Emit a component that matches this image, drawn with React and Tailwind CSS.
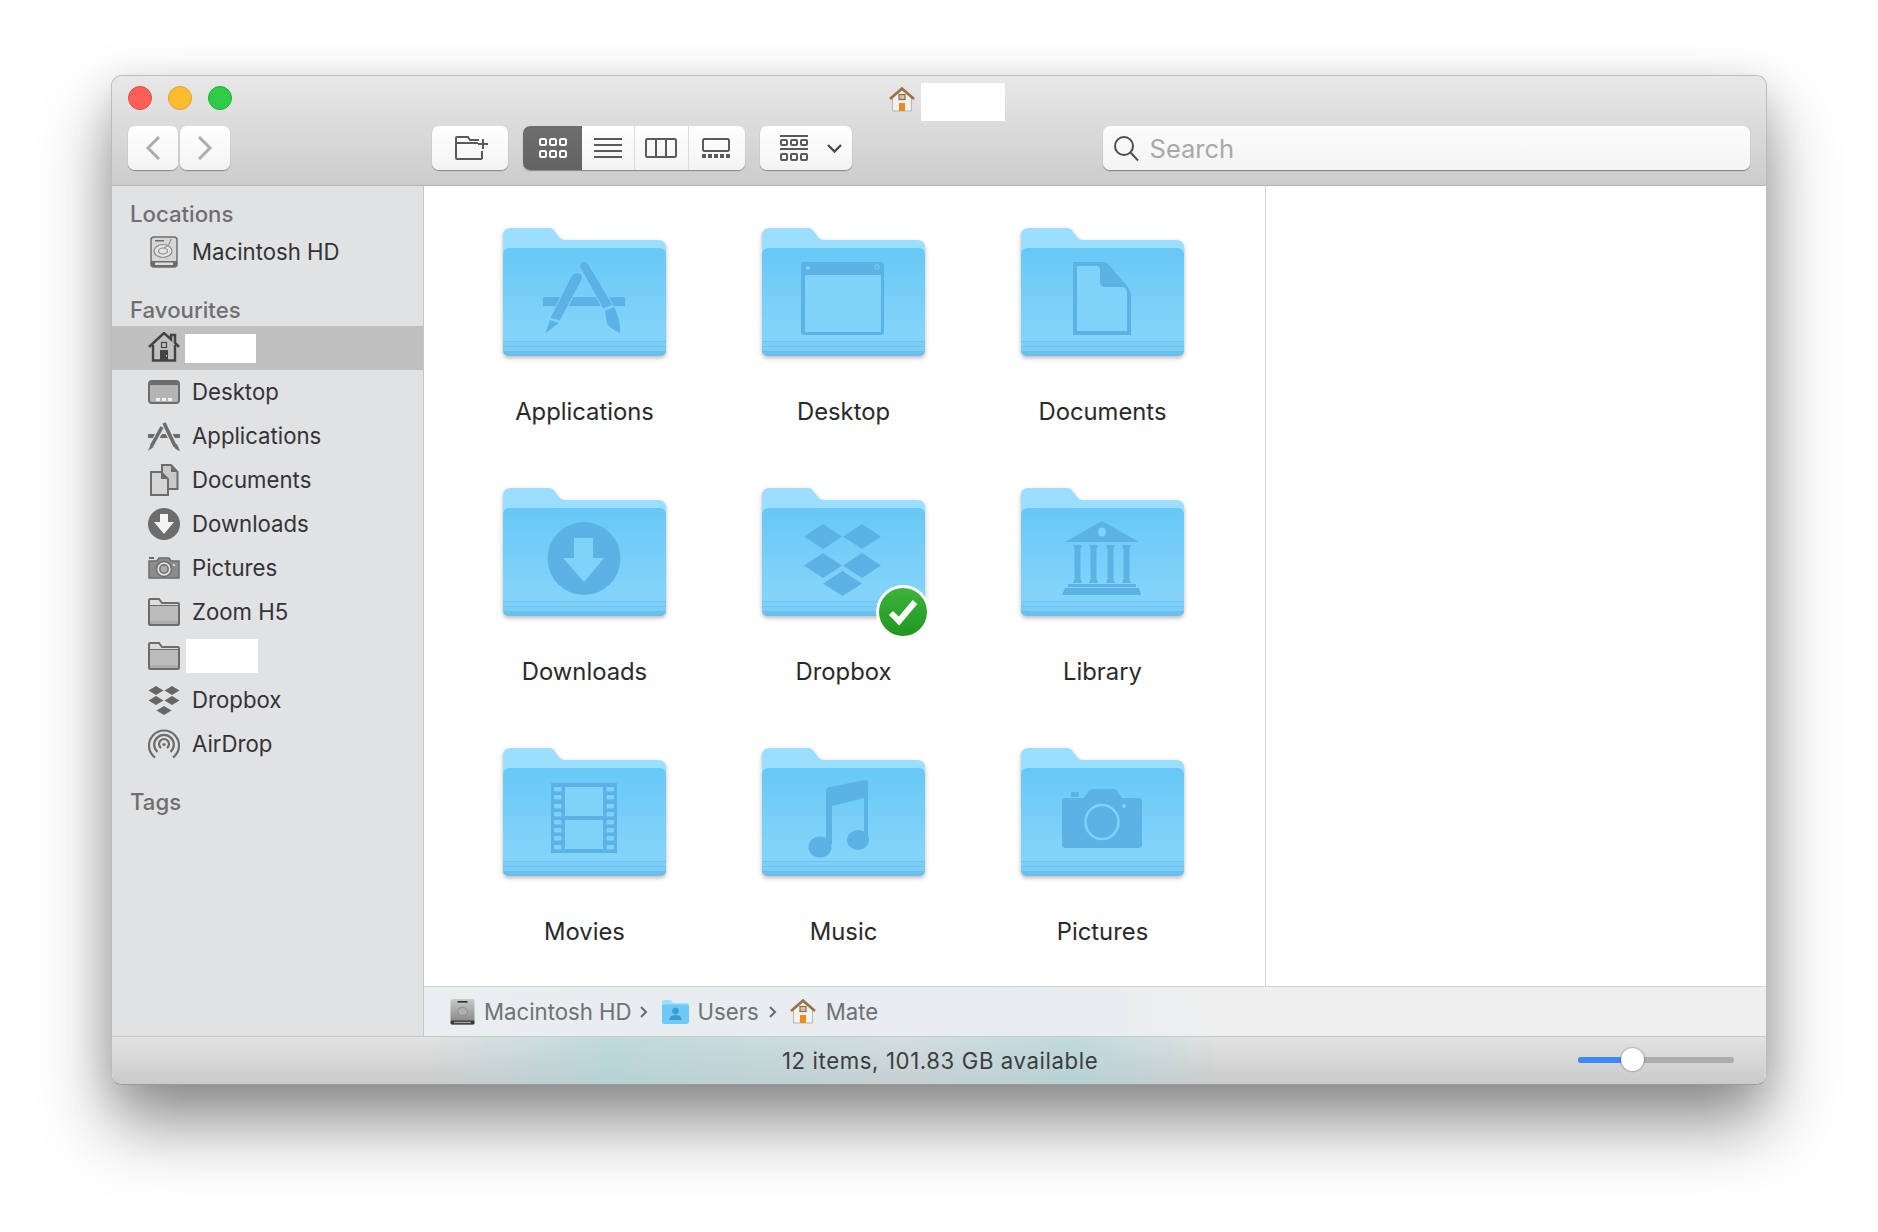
import React from "react";

const GLYPH = "#5ab3e4";
const LIGHT = "#7fd2f9";

function AppsGlyph() {
  return (
    <g fill={GLYPH}>
      <rect x="40" y="69" width="82" height="9" />
      <path d="M68 48 Q72 43 77 45 Q81 48 79 52 L57 93 L47 90 Z" stroke={LIGHT} strokeWidth="1" />
      <path d="M47 92 L56 95 L42.5 105 Z" />
      <path d="M76 38 Q77 33 82 33 Q86 34 87 38 L110 77 L100 81 Z" stroke={LIGHT} strokeWidth="1" />
      <path d="M102 83 L111 79 Q118 92 117 105 Q108 101 104 96 Z" />
    </g>
  );
}

function WindowGlyph() {
  return (
    <g>
      <rect x="39" y="34" width="83" height="73" rx="3" fill={GLYPH} />
      <rect x="43" y="47" width="76" height="57" rx="1" fill={LIGHT} />
      <circle cx="46" cy="40" r="2" fill={LIGHT} />
      <circle cx="115" cy="39" r="2.2" fill="none" stroke={LIGHT} strokeWidth="1" />
    </g>
  );
}

function DocGlyph() {
  return (
    <g>
      <path d="M52 34 H82 Q86 34 89 38 L106 58 Q110 63 110 70 V107 H52 Z" fill={GLYPH} />
      <path d="M56 38 H76 Q79 38 79 42 V54 Q79 59 84 59 H101 Q106 59 106 65 V103 H56 Z" fill={LIGHT} />
    </g>
  );
}

function DownGlyph() {
  return (
    <g>
      <circle cx="81" cy="70.5" r="36.5" fill={GLYPH} />
      <path d="M71 50 H90 V70 H101 L81 94 L60 70 H71 Z" fill={LIGHT} />
    </g>
  );
}

function DropboxGlyph() {
  return (
    <g fill={GLYPH}>
      <path d="M61 36 L80 48.5 L61 61 L42 48.5 Z" />
      <path d="M100 36 L119 48.5 L100 61 L81 48.5 Z" />
      <path d="M61 65 L80 77.5 L61 90 L42 77.5 Z" />
      <path d="M100 65 L119 77.5 L100 90 L81 77.5 Z" />
      <path d="M80.5 83 L100 95.5 L80.5 108 L61 95.5 Z" />
    </g>
  );
}

function LibraryGlyph() {
  return (
    <g fill={GLYPH}>
      <path d="M81 33 L118 54 H44 Z" />
      <ellipse cx="81" cy="44" rx="4" ry="4.5" fill={LIGHT} />
      <path d="M52 57 H61 L59.5 61 V91 L61 95 H52 L53.5 91 V61 Z" />
      <path d="M68 57 H77 L75.5 61 V91 L77 95 H68 L69.5 91 V61 Z" />
      <path d="M85 57 H94 L92.5 61 V91 L94 95 H85 L86.5 91 V61 Z" />
      <path d="M101 57 H110 L108.5 61 V91 L110 95 H101 L102.5 91 V61 Z" />
      <rect x="47" y="96" width="68" height="3" />
      <path d="M44 100 H118 L120 107 H41 Z" />
    </g>
  );
}

function MoviesGlyph() {
  const holes = [39, 47, 56, 64, 72, 80, 88, 97];
  return (
    <g>
      <rect x="48" y="35" width="66" height="70" fill={GLYPH} />
      <rect x="62" y="39" width="38" height="29" fill={LIGHT} />
      <rect x="62" y="72" width="38" height="29" fill={LIGHT} />
      {holes.map((y) => (
        <g key={y} fill={LIGHT}>
          <rect x="51" y={y} width="7.5" height="4.5" rx="1" />
          <rect x="103.5" y={y} width="7.5" height="4.5" rx="1" />
        </g>
      ))}
    </g>
  );
}

function MusicGlyph() {
  return (
    <g fill={GLYPH}>
      <path d="M64 43 Q64 40 67 39 L104 32 Q106 32 106 34 V90 H102 V50 L70 58 V96 H64 Z" />
      <ellipse cx="58" cy="99" rx="11.5" ry="10.5" />
      <ellipse cx="96" cy="92" rx="11" ry="10" />
    </g>
  );
}

function CameraGlyph() {
  return (
    <g>
      <rect x="50" y="44" width="8" height="5" rx="1" fill={GLYPH} />
      <path d="M45 50 H63 L67 44 Q68 41 72 41 H92 Q96 41 97 44 L101 50 H117 Q121 50 121 54 V96 Q121 100 117 100 H45 Q41 100 41 96 V54 Q41 50 45 50 Z" fill={GLYPH} />
      <ellipse cx="81" cy="74" rx="16.5" ry="17" fill="none" stroke={LIGHT} strokeWidth="2.5" />
      <circle cx="103" cy="58" r="2" fill={LIGHT} />
    </g>
  );
}

function BigFolder({ children }) {
  return (
    <svg width="163" height="128" viewBox="0 0 163 128" className="drop-shadow-[0_2px_2px_rgba(0,0,0,0.28)]">
      <defs>
        <linearGradient id="frontGrad" x1="0" y1="0" x2="0" y2="1">
          <stop offset="0" stopColor="#67c8f6" />
          <stop offset="0.8" stopColor="#84d4fa" />
          <stop offset="1" stopColor="#80d1f8" />
        </linearGradient>
      </defs>
      <path d="M0 8 Q0 0 8 0 H46 Q50 0 52 4 L56 9 Q58 12 62 12 H155 Q163 12 163 20 V60 H0 Z" fill="#9cdeff" />
      <path d="M0 27 Q0 20 7 20 H156 Q163 20 163 27 V121 Q163 128 156 128 H7 Q0 128 0 121 Z" fill="url(#frontGrad)" />
      <rect x="0" y="113" width="163" height="1" fill="#6fc4ef" />
      <rect x="0" y="114" width="163" height="4" fill="#7dcff7" />
      <rect x="0" y="118" width="163" height="1" fill="#6fc4ef" />
      <rect x="0" y="119" width="163" height="4" fill="#7acdf5" />
      <path d="M0 123 H163 C163 126 160 128 156 128 H7 C3 128 0 126 0 123 Z" fill="#6bbfec" />
      {children}
    </svg>
  );
}

function SyncBadge() {
  return (
    <div className="absolute right-[-5px] bottom-[-23px] flex h-[54px] w-[54px] items-center justify-center rounded-full bg-white">
      <div className="flex h-[48px] w-[48px] items-center justify-center rounded-full bg-[linear-gradient(#3db53d,#1f961f)]">
        <svg width="34" height="30" viewBox="0 0 34 30">
          <path d="M5 16 L13 24 L29 5" fill="none" stroke="#fff" strokeWidth="6" />
        </svg>
      </div>
    </div>
  );
}

const GREY = "#6c6c6c";

function HomeSide() {
  return (
    <svg width="32" height="30" viewBox="0 0 32 30" className="-mt-[2px]">
      <path d="M1 15 L16 1 L23 7.5 V3 H27 V11 L31 15" fill="none" stroke="#444" strokeWidth="2.5" />
      <path d="M5 13 V28.5 H27 V13" fill="none" stroke="#444" strokeWidth="2.4" />
      <rect x="13.5" y="10.5" width="5" height="5" fill="none" stroke="#444" strokeWidth="1.2" />
      <rect x="12" y="18" width="8" height="11" fill="#444" />
      <rect x="18" y="23" width="1" height="1.5" fill="#ccc" />
    </svg>
  );
}

function DesktopSide() {
  return (
    <svg width="32" height="24" viewBox="0 0 32 24">
      <rect x="1" y="1" width="30" height="22" rx="3" fill="#b4b4b5" stroke={GREY} strokeWidth="2" />
      <rect x="2" y="2" width="28" height="3" fill={GREY} />
      <rect x="8" y="18" width="4" height="3" fill="#eee" />
      <rect x="14" y="18" width="4" height="3" fill="#eee" />
      <rect x="20" y="18" width="4" height="3" fill="#eee" />
    </svg>
  );
}

function AppsSide() {
  return (
    <svg width="32" height="30" viewBox="0 0 32 30">
      <rect x="0" y="13" width="32" height="4" fill={GREY} />
      <path d="M15 5 L3 26" stroke="#e1e2e4" strokeWidth="6" />
      <path d="M15 2 L29 27" stroke="#e1e2e4" strokeWidth="6" />
      <path d="M14 6 L3.5 25" stroke={GREY} strokeWidth="3.6" />
      <path d="M2.5 24 L5.5 26 L0 30 Z" fill={GREY} />
      <path d="M16 2 L27 25" stroke={GREY} strokeWidth="3.6" />
      <path d="M25 24 L29 23 L32 30 Q27 29 25 24 Z" fill={GREY} />
    </svg>
  );
}

function DocsSide() {
  return (
    <svg width="30" height="32" viewBox="0 0 30 32">
      <path d="M13 1 H22 L28.5 8 V25 H13 Z" fill="#c9c9ca" stroke={GREY} strokeWidth="2" />
      <path d="M2 8 H12 L19 15 V31 H2 Z" fill="#d5d5d6" stroke={GREY} strokeWidth="2" />
      <path d="M12 8 V15 H19 Z" fill={GREY} />
      <path d="M22 1 V8 H28 Z" fill={GREY} />
    </svg>
  );
}

function DownloadsSide() {
  return (
    <svg width="32" height="32" viewBox="0 0 32 32">
      <circle cx="16" cy="16" r="16" fill={GREY} />
      <path d="M12 6 H20 V14 H26 L16 26 L6 14 H12 Z" fill="#f4f4f4" />
    </svg>
  );
}

function PicturesSide() {
  return (
    <svg width="32" height="22" viewBox="0 0 32 22">
      <rect x="1" y="0" width="5" height="2" fill={GREY} />
      <path d="M1 4 H9 L11 1 H21 L23 4 H31 V21 H1 Z" fill="#8c8c8c" stroke={GREY} strokeWidth="1.5" />
      <circle cx="16" cy="12" r="7.5" fill="#e1e2e4" stroke={GREY} strokeWidth="1.5" />
      <circle cx="16" cy="12" r="4.2" fill="#aaa" stroke={GREY} strokeWidth="1.5" />
      <circle cx="26" cy="8" r="1" fill="#eee" />
    </svg>
  );
}

function FolderSide() {
  return (
    <svg width="32" height="28" viewBox="0 0 32 28">
      <path d="M1 26 V2 Q1 1 2 1 H11 L14 5 H30 Q31 5 31 6 V26 Q31 27 30 27 H2 Q1 27 1 26 Z" fill="#dcdcdd" stroke={GREY} strokeWidth="2" />
      <path d="M2 8 H30 V26 H2 Z" fill="#bcbcbd" />
      <path d="M1 7.5 H31" stroke={GREY} strokeWidth="1" />
      <rect x="2" y="23" width="28" height="3" fill="#adadad" />
    </svg>
  );
}

function DropboxSide() {
  return (
    <svg width="32" height="29" viewBox="0 0 32 29" fill="#666">
      <path d="M8 0 L15.5 4.5 L8 9 L0.5 4.5 Z" />
      <path d="M24 0 L31.5 4.5 L24 9 L16.5 4.5 Z" />
      <path d="M8 10 L15.5 14.5 L8 19 L0.5 14.5 Z" />
      <path d="M24 10 L31.5 14.5 L24 19 L16.5 14.5 Z" />
      <path d="M16 20 L23.5 24.5 L16 29 L8.5 24.5 Z" />
    </svg>
  );
}

function AirDropSide() {
  return (
    <svg width="32" height="30" viewBox="0 0 32 30" fill="none" stroke={GREY} strokeWidth="2.2">
      <path d="M7 28.5 A15 15 0 1 1 25 28.5" />
      <path d="M9.5 23 A9.8 9.8 0 1 1 22.5 23" />
      <path d="M13 19 A5 5 0 1 1 19 19" />
      <circle cx="16" cy="15.5" r="1.6" fill={GREY} stroke="none" />
    </svg>
  );
}

function DiskSide() {
  return (
    <svg width="28" height="32" viewBox="0 0 28 32">
      <rect x="1" y="1" width="26" height="30" rx="3" fill="#d6d6d6" stroke={GREY} strokeWidth="1.5" />
      <path d="M1 25 H27 V28 Q27 31 24 31 H4 Q1 31 1 28 Z" fill={GREY} />
      <rect x="5" y="26.5" width="18" height="2.5" fill="#ddd" />
      <rect x="5" y="4" width="9" height="1.5" fill={GREY} />
      <ellipse cx="13" cy="15" rx="9" ry="6.5" fill="#e3e3e3" stroke="#8a8a8a" strokeWidth="1.2" />
      <ellipse cx="13" cy="15" rx="4.5" ry="3" fill="none" stroke="#8a8a8a" strokeWidth="1.2" />
      <path d="M14 12 Q20 9 21 3" fill="none" stroke="#8a8a8a" strokeWidth="1.2" />
    </svg>
  );
}

function HomeColor() {
  return (
    <svg width="26" height="25" viewBox="0 0 26 25">
      <path d="M3.5 11 L13 3 L22.5 11 V24 H3.5 Z" fill="#f3f1ee" stroke="#a9a9a9" strokeWidth="0.8" />
      <path d="M1 12 L13 1.5 L25 12" fill="none" stroke="#9c7146" strokeWidth="2.6" />
      <rect x="10" y="7.5" width="6" height="5" fill="#c9c4bc" stroke="#8f6a44" strokeWidth="1.2" />
      <rect x="10" y="16" width="6" height="8" fill="#ee8a1c" />
    </svg>
  );
}

function HdColor() {
  return (
    <svg width="25" height="26" viewBox="0 0 25 26">
      <defs>
        <linearGradient id="hdGrad" x1="0" y1="0" x2="0" y2="1">
          <stop offset="0" stopColor="#c9c9c9" />
          <stop offset="1" stopColor="#818181" />
        </linearGradient>
      </defs>
      <rect x="0.5" y="0" width="24" height="25.5" rx="2.5" fill="url(#hdGrad)" />
      <rect x="7.5" y="2" width="10" height="1.6" fill="#2f2f2f" />
      <ellipse cx="12.5" cy="12.5" rx="5" ry="4" fill="#b0b0b0" stroke="#8d8d8d" />
      <rect x="0.5" y="21.5" width="24" height="4" rx="1.5" fill="#3a3a3a" />
      <rect x="4" y="22.8" width="17" height="1.3" fill="#a5a5a5" />
    </svg>
  );
}

function UsersColor() {
  return (
    <svg width="27" height="24" viewBox="0 0 27 24">
      <path d="M0 2 Q0 0 2 0 H9 L11 3 H25 Q27 3 27 5 V8 H0 Z" fill="#9cdeff" />
      <rect x="0" y="4.5" width="27" height="19.5" rx="2" fill="#6ec9f6" />
      <circle cx="13.5" cy="11" r="3.3" fill="#3d9bd3" />
      <path d="M7 20 Q8 15 13.5 15 Q19 15 20 20 Z" fill="#3d9bd3" />
    </svg>
  );
}

function SectionHead({ children, className = "" }) {
  return (
    <div className={"flex h-8 items-center pl-[18px] text-[22.2px] font-medium text-[#6f6f70] " + className}>
      {children}
    </div>
  );
}

function SideRow({ icon, label, blank, active }) {
  return (
    <div className={"flex h-11 items-center pl-9 " + (active ? "bg-[#c0c0c1]" : "")}>
      <div className="flex w-8 shrink-0 items-center justify-center">{icon}</div>
      {blank ? (
        <div className={blank} />
      ) : (
        <span className="ml-3 text-[22.2px] text-[#333335]">{label}</span>
      )}
    </div>
  );
}

const folders = [
  { name: "Applications", glyph: <AppsGlyph /> },
  { name: "Desktop", glyph: <WindowGlyph /> },
  { name: "Documents", glyph: <DocGlyph /> },
  { name: "Downloads", glyph: <DownGlyph /> },
  { name: "Dropbox", glyph: <DropboxGlyph />, synced: true },
  { name: "Library", glyph: <LibraryGlyph /> },
  { name: "Movies", glyph: <MoviesGlyph /> },
  { name: "Music", glyph: <MusicGlyph /> },
  { name: "Pictures", glyph: <CameraGlyph /> },
];

function ToolButton({ className = "", children }) {
  return (
    <div className={"flex h-11 items-center justify-center rounded-[7px] bg-[linear-gradient(#ffffff,#f3f3f3)] shadow-[0_1px_1px_rgba(0,0,0,0.35)] " + className}>
      {children}
    </div>
  );
}

function Toolbar() {
  const ink = "#5a5a5a";
  return (
    <div className="flex h-11 items-center px-4">
      <ToolButton className="w-[50px]">
        <svg width="16" height="24" viewBox="0 0 16 24" fill="none" stroke="#adadad" strokeWidth="3">
          <path d="M14 1 L3 12 L14 23" />
        </svg>
      </ToolButton>
      <ToolButton className="ml-[2px] w-[50px]">
        <svg width="16" height="24" viewBox="0 0 16 24" fill="none" stroke="#adadad" strokeWidth="3">
          <path d="M2 1 L13 12 L2 23" />
        </svg>
      </ToolButton>
      <ToolButton className="ml-[202px] w-[76px] pl-[4px]">
        <svg width="34" height="24" viewBox="0 0 34 24" fill="none" stroke={ink} strokeWidth="2">
          <path d="M27 23 H2 Q1 23 1 22 V2 Q1 1 2 1 H13 L15 4 H24" />
          <path d="M1 7 H23" />
          <path d="M27 15 V23" />
          <path d="M28 3 V13 M23 8 H33" />
        </svg>
      </ToolButton>
      <div className="ml-[15px] flex h-11 w-[222px] overflow-hidden rounded-[7px] bg-[linear-gradient(#ffffff,#f3f3f3)] shadow-[0_1px_1px_rgba(0,0,0,0.35)]">
        <div className="flex w-[59px] items-center justify-center bg-[linear-gradient(#6e6e6e,#636363)] pl-[2px]">
          <svg width="28" height="20" viewBox="0 0 28 20" fill="none" stroke="#fff" strokeWidth="2">
            <rect x="1" y="1" width="6" height="6" rx="1.5" />
            <rect x="11" y="1" width="6" height="6" rx="1.5" />
            <rect x="21" y="1" width="6" height="6" rx="1.5" />
            <rect x="1" y="13" width="6" height="6" rx="1.5" />
            <rect x="11" y="13" width="6" height="6" rx="1.5" />
            <rect x="21" y="13" width="6" height="6" rx="1.5" />
          </svg>
        </div>
        <div className="flex w-[53px] items-center justify-center border-r border-[#dcdcdc]">
          <svg width="28" height="20" viewBox="0 0 28 20" fill={ink}>
            <rect y="0" width="28" height="2" />
            <rect y="6" width="28" height="2" />
            <rect y="12" width="28" height="2" />
            <rect y="18" width="28" height="2" />
          </svg>
        </div>
        <div className="flex w-[54px] items-center justify-center border-r border-[#dcdcdc]">
          <svg width="32" height="20" viewBox="0 0 32 20" fill="none" stroke={ink} strokeWidth="2">
            <rect x="1" y="1" width="30" height="18" rx="1.5" />
            <path d="M11 1 V19 M21 1 V19" />
          </svg>
        </div>
        <div className="flex flex-1 items-center justify-center pr-[2px]">
          <svg width="28" height="20" viewBox="0 0 28 20" fill={ink}>
            <rect x="1" y="1" width="26" height="12" rx="1.5" fill="none" stroke={ink} strokeWidth="2" />
            <rect x="0" y="16" width="4" height="4" />
            <rect x="6" y="16" width="4" height="4" />
            <rect x="12" y="16" width="4" height="4" />
            <rect x="18" y="16" width="4" height="4" />
            <rect x="24" y="16" width="4" height="4" />
          </svg>
        </div>
      </div>
      <ToolButton className="ml-[15px] w-[92px] gap-[19px] pl-[10px]">
        <svg width="28" height="26" viewBox="0 0 28 26" fill="none" stroke={ink} strokeWidth="2">
          <path d="M0 1 H28" />
          <rect x="1" y="5" width="6" height="5" rx="1" />
          <rect x="11" y="5" width="6" height="5" rx="1" />
          <rect x="21" y="5" width="6" height="5" rx="1" />
          <path d="M0 14 H28" />
          <rect x="1" y="19" width="6" height="6" rx="1" />
          <rect x="11" y="19" width="6" height="6" rx="1" />
          <rect x="21" y="19" width="6" height="6" rx="1" />
        </svg>
        <svg width="15" height="9" viewBox="0 0 15 9" fill="none" stroke="#4a4a4a" strokeWidth="2.4">
          <path d="M1 1 L7.5 7.5 L14 1" />
        </svg>
      </ToolButton>
      <div className="ml-[251px] flex h-11 w-[648px] items-center rounded-[7px] bg-[linear-gradient(#fcfcfc,#f4f4f4)] pl-[11px] shadow-[0_1px_1px_rgba(0,0,0,0.4)]">
        <svg width="25" height="25" viewBox="0 0 25 25" fill="none" stroke="#4d4d4d" strokeWidth="2">
          <circle cx="10" cy="10" r="9" />
          <path d="M16.5 16.5 L24 24.5" />
        </svg>
        <span className="ml-[11px] mt-[2px] text-[25.5px] text-[#a9a9a9]">Search</span>
      </div>
    </div>
  );
}

export default function App() {
  return (
    <div className="h-[1232px] w-[1878px] overflow-hidden bg-white pl-[111px] pt-[75px] font-['Inter',sans-serif]">
      <div className="flex h-[1010px] w-[1656px] flex-col overflow-hidden rounded-[11px] border border-[#bcbcbc] border-b-[#9a9a9a] bg-white shadow-[0_40px_70px_rgba(0,0,0,0.42),0_10px_40px_rgba(0,0,0,0.12)]">
        <div className="h-[110px] shrink-0 border-b border-[#b4b4b4] bg-[linear-gradient(#e8e8e8,#cccccc)]">
          <div className="flex h-[50px] pl-4">
            <div className="mt-[10px] flex gap-4">
              <div className="h-6 w-6 rounded-full border border-[#e24a42] bg-[#ff5f57]" />
              <div className="h-6 w-6 rounded-full border border-[#e0a028] bg-[#ffbd2e]" />
              <div className="h-6 w-6 rounded-full border border-[#1eab35] bg-[#2ecb47]" />
            </div>
            <div className="ml-[657px] mt-[11px]"><HomeColor /></div>
            <div className="ml-[6px] mt-[7px] h-[38px] w-[84px] bg-white" />
          </div>
          <Toolbar />
        </div>
        <div className="flex min-h-0 flex-1">
          <div className="w-[312px] shrink-0 border-r border-[#c6c6c6] bg-[#e1e2e4] pt-3">
            <SectionHead>Locations</SectionHead>
            <SideRow icon={<DiskSide />} label="Macintosh HD" />
            <SectionHead className="mt-5">Favourites</SectionHead>
            <SideRow icon={<HomeSide />} blank="ml-[5px] h-[29px] w-[71px] bg-white" active />
            <SideRow icon={<DesktopSide />} label="Desktop" />
            <SideRow icon={<AppsSide />} label="Applications" />
            <SideRow icon={<DocsSide />} label="Documents" />
            <SideRow icon={<DownloadsSide />} label="Downloads" />
            <SideRow icon={<PicturesSide />} label="Pictures" />
            <SideRow icon={<FolderSide />} label="Zoom H5" />
            <SideRow icon={<FolderSide />} blank="ml-[6px] h-[34px] w-[72px] bg-white" />
            <SideRow icon={<DropboxSide />} label="Dropbox" />
            <SideRow icon={<AirDropSide />} label="AirDrop" />
            <SectionHead className="mt-5">Tags</SectionHead>
          </div>
          <div className="flex min-w-0 flex-1 flex-col">
            <div className="flex h-[800px] shrink-0">
              <div className="w-[842px] shrink-0 border-r border-[#d4d4d4] pl-[31px] pt-[42px]">
                <div className="grid w-[777px] grid-cols-[repeat(3,259px)] grid-rows-[repeat(3,260px)]">
                  {folders.map((f) => (
                    <div key={f.name} className="flex flex-col items-center">
                      <div className="relative h-[128px] w-[163px]">
                        <BigFolder>{f.glyph}</BigFolder>
                        {f.synced && <SyncBadge />}
                      </div>
                      <div className="mt-[41px] text-[23.8px] leading-[30px] text-[#2a2a2b]">{f.name}</div>
                    </div>
                  ))}
                </div>
              </div>
              <div className="flex-1 bg-white" />
            </div>
            <div className="flex h-[50px] items-center border-t border-[#d2d2d2] bg-[linear-gradient(90deg,#e9eef0_0%,#e6ecf0_45%,#efefef_60%,#efefef_100%)] pl-[26px] text-[22.2px] text-[#707173]">
              <HdColor />
              <span className="ml-[9px]">Macintosh HD</span>
              <span className="ml-[8px] text-[#6a6a6a]">
                <svg width="8" height="12" viewBox="0 0 8 12" fill="none" stroke="currentColor" strokeWidth="2"><path d="M1 1 L6 6 L1 11" /></svg>
              </span>
              <span className="ml-[14px]"><UsersColor /></span>
              <span className="ml-[9px]">Users</span>
              <span className="ml-[10px] text-[#6a6a6a]">
                <svg width="8" height="12" viewBox="0 0 8 12" fill="none" stroke="currentColor" strokeWidth="2"><path d="M1 1 L6 6 L1 11" /></svg>
              </span>
              <span className="ml-[13px]"><HomeColor /></span>
              <span className="ml-[10px]">Mate</span>
            </div>
          </div>
        </div>
        <div className="relative flex h-[48px] shrink-0 items-center border-t border-[#c8c8c8] bg-[linear-gradient(90deg,rgba(170,214,218,0)_19%,rgba(170,214,218,0.62)_30%,rgba(190,215,218,0.42)_48%,rgba(170,214,218,0.62)_58%,rgba(170,214,218,0)_67%),linear-gradient(#e2e2e2,#cbcbcb)]">
          <div className="ml-[670px] text-[22.2px] tracking-[0.6px] text-[#3d3d3f]">12 items, 101.83 GB available</div>
          <div className="absolute right-[32px] top-[20px] flex h-[6px] w-[156px] rounded-full bg-[#acacac]">
            <div className="h-[6px] w-[50px] rounded-l-full bg-[#3f89f7]" />
            <div className="absolute left-[43px] top-[-9px] h-[23px] w-[23px] rounded-full bg-white shadow-[0_0_2px_rgba(0,0,0,0.6)]" />
          </div>
        </div>
      </div>
    </div>
  );
}
